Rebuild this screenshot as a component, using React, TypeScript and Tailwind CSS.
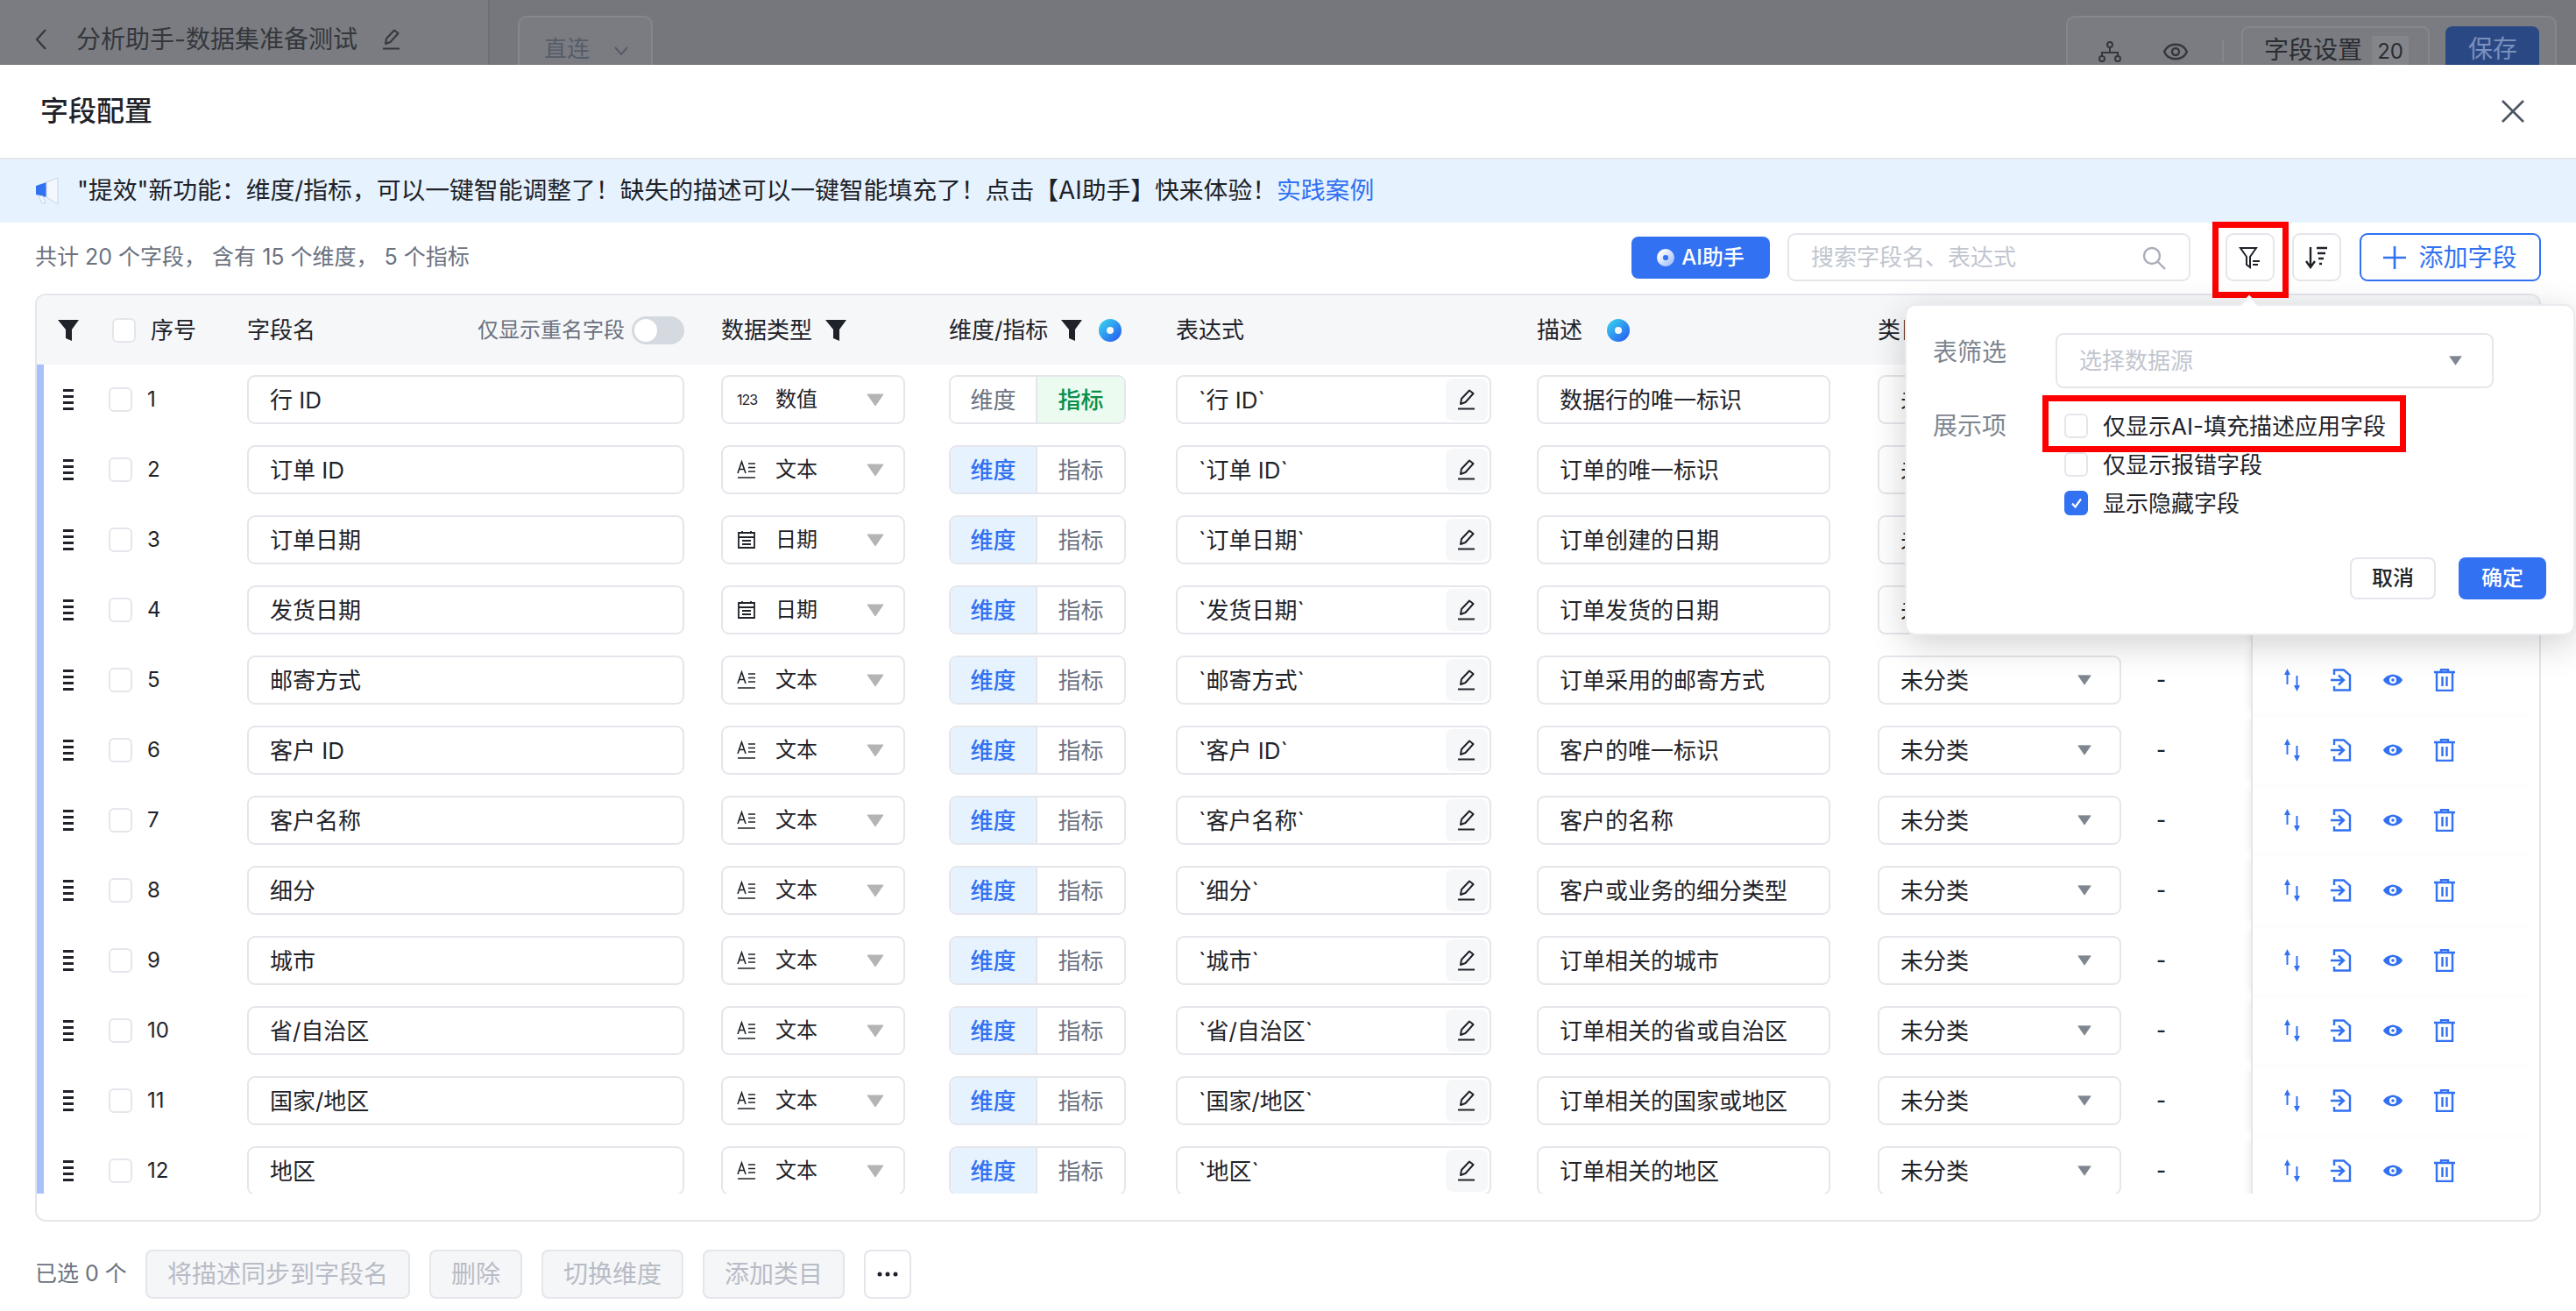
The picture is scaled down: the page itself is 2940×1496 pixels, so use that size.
import { ReactNode } from 'react'

type FieldType = 'num' | 'text' | 'date'

type Field = {
  id: number
  name: string
  type: FieldType
  desc: string
  metric?: boolean
}

const fields: Field[] = [
  { id: 1, name: '行 ID', type: 'num', desc: '数据行的唯一标识', metric: true },
  { id: 2, name: '订单 ID', type: 'text', desc: '订单的唯一标识' },
  { id: 3, name: '订单日期', type: 'date', desc: '订单创建的日期' },
  { id: 4, name: '发货日期', type: 'date', desc: '订单发货的日期' },
  { id: 5, name: '邮寄方式', type: 'text', desc: '订单采用的邮寄方式' },
  { id: 6, name: '客户 ID', type: 'text', desc: '客户的唯一标识' },
  { id: 7, name: '客户名称', type: 'text', desc: '客户的名称' },
  { id: 8, name: '细分', type: 'text', desc: '客户或业务的细分类型' },
  { id: 9, name: '城市', type: 'text', desc: '订单相关的城市' },
  { id: 10, name: '省/自治区', type: 'text', desc: '订单相关的省或自治区' },
  { id: 11, name: '国家/地区', type: 'text', desc: '订单相关的国家或地区' },
  { id: 12, name: '地区', type: 'text', desc: '订单相关的地区' },
]

const typeLabel: Record<FieldType, string> = { num: '数值', text: '文本', date: '日期' }

const gridCols = 'grid grid-cols-[60px_172px_541px_260px_259px_412px_389px_426px_329px]'

function Funnel() {
  return (
    <svg width="24" height="24" viewBox="0 0 24 24" className="shrink-0">
      <path d="M0 0H24L16 11V24L9 21V11Z" fill="#1f2329" />
    </svg>
  )
}

function AiMark({ size = 26, light = false }: { size?: number; light?: boolean }) {
  const gid = light ? 'aiLight' : 'aiBlue'
  return (
    <svg width={size} height={size} viewBox="0 0 26 26" className="shrink-0">
      <defs>
        <linearGradient id={gid} x1="0" y1="0" x2="1" y2="1">
          <stop offset="0" stopColor={light ? '#ffffff' : '#35c3ee'} />
          <stop offset="1" stopColor={light ? '#a9c4fb' : '#2a6bf2'} />
        </linearGradient>
      </defs>
      <circle cx="13" cy="13" r="8.500" fill="none" stroke={`url(#${gid})`} strokeWidth="9" />
    </svg>
  )
}

function Caret({ color = '#b4b4b4', w = 20, h = 15 }: { color?: string; w?: number; h?: number }) {
  return (
    <svg width={w} height={h} viewBox="0 0 20 15" preserveAspectRatio="none" className="shrink-0">
      <path d="M1 1H19L10 14Z" fill={color} stroke={color} strokeLinejoin="round" />
    </svg>
  )
}

function Check({ on = false, className = '' }: { on?: boolean; className?: string }) {
  return (
    <span
      className={`flex h-[28px] w-[27px] shrink-0 items-center justify-center rounded-[6px] border-2 ${
        on ? 'border-[#3271f2] bg-[#3271f2]' : 'border-[#e5e6eb] bg-white'
      } ${className}`}
    >
      {on && (
        <svg width="16" height="16" viewBox="0 0 16 16">
          <path d="M3 8.500L6.500 12.500L13 3.500" fill="none" stroke="#fff" strokeWidth="2.200" />
        </svg>
      )}
    </span>
  )
}

function Handle() {
  return (
    <div className="ml-[22px] flex h-[24px] w-[12px] flex-col justify-between">
      <span className="h-[3px] bg-[#1f2329]" />
      <span className="h-[3px] bg-[#1f2329]" />
      <span className="h-[3px] bg-[#1f2329]" />
      <span className="h-[3px] bg-[#1f2329]" />
    </div>
  )
}

function TypeIcon({ type }: { type: FieldType }) {
  if (type === 'num') {
    return <span className="w-[24px] text-[16px] tracking-[-1px] text-[#1f2329]">123</span>
  }
  if (type === 'date') {
    return (
      <svg width="22" height="22" viewBox="0 0 22 22" className="mr-[2px]">
        <path
          d="M2 3H20V20H2ZM2 8H20M6 12H16M6 16H16M6 1V3M16 1V3"
          fill="none"
          stroke="#1f2329"
          strokeWidth="1.800"
        />
      </svg>
    )
  }
  return (
    <svg width="22" height="24" viewBox="0 0 22 24" className="mr-[2px]">
      <path
        d="M1 16L5.500 3L10 16M2.500 11.500H8.500M13 5H21M13 9.500H21M13 14H21M1 21H21"
        fill="none"
        stroke="#1f2329"
        strokeWidth="1.600"
      />
    </svg>
  )
}

function Pencil({ color = '#1f2329' }: { color?: string }) {
  return (
    <svg width="22" height="24" viewBox="0 0 22 24" className="shrink-0">
      <path
        d="M4 17L5 11L14 1.500L18.500 5L9.500 15Z M1 22.500H20"
        fill="none"
        stroke={color}
        strokeWidth="2"
        strokeLinejoin="round"
      />
    </svg>
  )
}

function ActionIcons() {
  return (
    <div className="ml-[36px] flex items-center">
      <svg width="18" height="26" viewBox="0 0 18 26">
        <path d="M3.500 0L7 7H4.500V18H2.500V7H0ZM14.500 26L11 19H13.500V8H15.500V19H18Z" fill="#3271f2" />
      </svg>
      <svg width="24" height="26" viewBox="0 0 24 26" className="ml-[35px]">
        <path
          d="M4 7V1.500H15L22 7.500V24.500H4V20M0 13H14M9 7.500L15 13L9 18.500"
          fill="none"
          stroke="#3271f2"
          strokeWidth="2.400"
        />
      </svg>
      <svg width="24" height="24" viewBox="0 0 24 24" className="ml-[35px]">
        <path d="M1 12C5 4 19 4 23 12C19 20 5 20 1 12Z" fill="#3271f2" />
        <circle cx="12" cy="12" r="6.500" fill="#3271f2" />
        <circle cx="12" cy="12" r="4" fill="#fff" />
        <circle cx="12" cy="12" r="1.800" fill="#3271f2" />
      </svg>
      <svg width="24" height="26" viewBox="0 0 24 26" className="ml-[35px]">
        <path
          d="M0 4H24M8 4V1H16V4M3 4V25H21V4M9.500 9V20M14.500 9V20"
          fill="none"
          stroke="#3271f2"
          strokeWidth="2.400"
        />
      </svg>
    </div>
  )
}

function Box({ className = '', children }: { className?: string; children: ReactNode }) {
  return (
    <div className={`flex h-[56px] items-center rounded-[9px] border-2 border-[#e5e6eb] bg-white ${className}`}>
      {children}
    </div>
  )
}

function Row({ field }: { field: Field }) {
  return (
    <div className={`${gridCols} h-[80px] items-center border-l-8 border-[#a8c1fb]`}>
      <Handle />
      <div className="flex items-center pl-[14px] text-[24px] text-[#1f2329]">
        <Check />
        <span className="ml-[17px]">{field.id}</span>
      </div>
      <Box className="w-[499px] pl-[24px] text-[26px] text-[#1f2329]">{field.name}</Box>
      <Box className="w-[210px] pl-[16px] pr-[22px] text-[24px] text-[#1f2329]">
        <TypeIcon type={field.type} />
        <span className="ml-[20px] flex-1">{typeLabel[field.type]}</span>
        <Caret />
      </Box>
      <div className="flex h-[56px] w-[202px] overflow-hidden rounded-[9px] border-2 border-[#e5e6eb] text-[26px]">
        <span
          className={`flex flex-1 items-center justify-center border-r-2 border-[#e5e6eb] ${
            field.metric ? 'bg-white text-[#6b7280]' : 'bg-[#e6f3ff] font-medium text-[#3271f2]'
          }`}
        >
          维度
        </span>
        <span
          className={`flex w-[99px] items-center justify-center ${
            field.metric ? 'bg-[#ebfbf0] font-medium text-[#0a8f4a]' : 'bg-white text-[#6b7280]'
          }`}
        >
          指标
        </span>
      </div>
      <Box className="w-[360px] pl-[24px] pr-[2px] text-[26px] text-[#1f2329]">
        <span className="flex-1">{'`' + field.name + '`'}</span>
        <span className="flex h-[48px] w-[48px] items-center justify-center rounded-[8px] bg-[#f6f7f9]">
          <Pencil />
        </span>
      </Box>
      <Box className="w-[335px] pl-[24px] text-[26px] text-[#1f2329]">{field.desc}</Box>
      <div className="flex items-center">
        <Box className="w-[278px] pl-[24px] pr-[32px] text-[26px] text-[#1f2329]">
          <span className="flex-1">未分类</span>
          <Caret color="#7f8690" w={16} h={12} />
        </Box>
        <span className="ml-[40px] text-[24px] font-medium text-[#1f2329]">-</span>
      </div>
      <div className="flex h-[80px] items-center border-l-2 border-[#e5e6eb] shadow-[-6px_0_8px_-4px_rgba(0,0,0,0.08)]">
        <ActionIcons />
      </div>
    </div>
  )
}

function TopBar() {
  return (
    <div className="flex h-[74px] shrink-0 overflow-hidden bg-[#75777d]">
      <div className="flex w-[559px] items-center border-r-2 border-[#6e7076] bg-[#7a7c81] pl-[40px] pt-[16px] text-[#34373c]">
        <svg width="14" height="24" viewBox="0 0 14 24">
          <path d="M12 1L2 12L12 23" fill="none" stroke="#34373c" strokeWidth="2.200" />
        </svg>
        <span className="ml-[33px] text-[28px]">分析助手-数据集准备测试</span>
        <span className="ml-[28px]">
          <Pencil color="#34373c" />
        </span>
      </div>
      <div className="ml-[32px] mt-[18px] flex h-[56px] w-[154px] items-start rounded-t-[10px] border-2 border-b-0 border-[#85878c] bg-[#7a7c81] pl-[28px] pt-[17px] text-[26px] leading-[38px] text-[#565c69]">
        直连
        <svg width="16" height="10" viewBox="0 0 16 10" className="ml-[28px] mt-[16px]">
          <path d="M1 1L8 9L15 1" fill="none" stroke="#565c69" strokeWidth="2" />
        </svg>
      </div>
      <div className="ml-auto mr-[22px] mt-[18px] flex h-[56px] w-[560px] items-start rounded-t-[10px] border-2 border-b-0 border-[#85878c] bg-[#7a7c81]">
        <svg width="26" height="24" viewBox="0 0 26 24" className="ml-[35px] mt-[27px]">
          <path d="M13 7V13M4 18V13H22V18" fill="none" stroke="#34373c" strokeWidth="2" />
          <circle cx="13" cy="4" r="3" fill="none" stroke="#34373c" strokeWidth="2" />
          <circle cx="4" cy="20" r="3" fill="none" stroke="#34373c" strokeWidth="2" />
          <circle cx="22" cy="20" r="3" fill="none" stroke="#34373c" strokeWidth="2" />
        </svg>
        <svg width="28" height="22" viewBox="0 0 28 22" className="ml-[48px] mt-[28px]">
          <path d="M1 11C6 0 22 0 27 11C22 22 6 22 1 11Z" fill="none" stroke="#34373c" strokeWidth="2.400" />
          <circle cx="14" cy="11" r="4" fill="none" stroke="#34373c" strokeWidth="2.400" />
        </svg>
        <span className="ml-[39px] mt-[25px] h-[26px] w-[2px] bg-[#85878c]" />
        <div className="ml-[20px] mt-[10px] flex h-[44px] w-[215px] items-start rounded-t-[8px] border-2 border-b-0 border-[#85878c] pl-[24px] pt-[6px] text-[28px] leading-[38px] text-[#2a2d32]">
          字段设置
          <span className="ml-[11px] mt-[3px] h-[33px] w-[42px] bg-[#83858a] text-center text-[24px] leading-[36px]">20</span>
        </div>
        <div className="ml-[18px] mt-[10px] h-[44px] w-[107px] rounded-t-[8px] bg-[#2a4984] pl-[26px] pt-[8px] text-[28px] leading-[36px] text-[#7a90bd]">
          保存
        </div>
      </div>
    </div>
  )
}

function FilterPopover() {
  return (
    <div className="absolute left-[2174px] top-[347px] h-[378px] w-[765px] rounded-[12px] border-2 border-[#ebecf0] bg-white shadow-[0_10px_40px_rgba(0,0,0,0.18)]">
      <span className="absolute left-[383px] top-[-9px] h-[16px] w-[16px] rotate-45 border-l-2 border-t-2 border-[#ebecf0] bg-white" />
      <div className="ml-[30px] mt-[31px] flex">
        <span className="w-[140px] text-[28px] leading-[44px] text-[#7d8590]">表筛选</span>
        <div className="flex h-[63px] w-[500px] items-center rounded-[9px] border-2 border-[#e5e6eb] pl-[25px] pr-[34px] text-[26px] text-[#c2c6cf]">
          <span className="flex-1">选择数据源</span>
          <Caret color="#7f8690" w={15} h={11} />
        </div>
      </div>
      <div className="ml-[30px] mt-[21px] flex">
        <span className="w-[150px] text-[28px] leading-[44px] text-[#7d8590]">展示项</span>
        <div className="flex flex-col text-[26px] text-[#1f2329]">
          <label className="flex h-[44px] items-center gap-[17px]">
            <Check />
            仅显示AI-填充描述应用字段
          </label>
          <label className="flex h-[44px] items-center gap-[17px]">
            <Check />
            仅显示报错字段
          </label>
          <label className="flex h-[44px] items-center gap-[17px]">
            <Check on />
            显示隐藏字段
          </label>
        </div>
      </div>
      <div className="absolute right-[31px] top-[287px] flex gap-[26px] text-[24px]">
        <button className="h-[48px] w-[98px] rounded-[8px] border-2 border-[#e5e6eb] bg-white font-medium text-[#1f2329]">
          取消
        </button>
        <button className="h-[48px] w-[100px] rounded-[8px] bg-[#3271f2] font-medium text-white">确定</button>
      </div>
    </div>
  )
}

export default function App() {
  return (
    <div className="relative h-[1496px] w-[2940px] overflow-hidden bg-white font-[family-name:Inter,'Noto_Sans_CJK_SC',sans-serif]">
      <TopBar />

      <div className="flex h-[108px] items-center justify-between border-b-2 border-[#e5e6eb] pl-[46px] pr-[58px]">
        <h1 className="text-[32px] font-medium text-[#1f2329]">字段配置</h1>
        <svg width="28" height="28" viewBox="0 0 28 28">
          <path d="M2 2L26 26M26 2L2 26" stroke="#4b5563" strokeWidth="2.600" />
        </svg>
      </div>

      <div className="flex h-[72px] items-center bg-[#e6f3ff] pl-[40px] text-[27.800px] text-[#1f2329]">
        <svg width="28" height="32" viewBox="0 0 28 32">
          <path d="M1 10L13 6V23L1 20Z" fill="#3271f2" />
          <path d="M13 6L26 1V31L13 23Z" fill="#f4f8fd" stroke="#c5d4ea" strokeWidth="1" />
          <path d="M4 21L8 30H12L9 22Z" fill="#f4f8fd" stroke="#c5d4ea" strokeWidth="1" />
        </svg>
        <span className="ml-[20px]">
          "提效"新功能：维度/指标，可以一键智能调整了！缺失的描述可以一键智能填充了！点击【AI助手】快来体验！
        </span>
        <span className="text-[#3271f2]">实践案例</span>
      </div>

      <div className="flex h-[81px] items-center pb-[2px] pl-[40px] pr-[40px]">
        <span className="text-[25px] text-[#6b7280]">共计 20 个字段， 含有 15 个维度， 5 个指标</span>
        <button className="ml-auto flex h-[48px] w-[158px] items-center justify-center gap-[8px] rounded-[8px] bg-[#3271f2] text-[24px] font-medium text-white">
          <AiMark size={20} light />
          AI助手
        </button>
        <div className="ml-[20px] flex h-[55px] w-[460px] items-center rounded-[9px] border-2 border-[#e5e6eb] pl-[25px] pr-[26px] text-[26px] text-[#c2c6cf]">
          <span className="flex-1">搜索字段名、表达式</span>
          <svg width="28" height="28" viewBox="0 0 28 28">
            <circle cx="12" cy="12" r="9" fill="none" stroke="#a8adb7" strokeWidth="2.400" />
            <path d="M19 19L27 27" stroke="#a8adb7" strokeWidth="2.400" />
          </svg>
        </div>
        <button className="relative ml-[40px] flex h-[55px] w-[56px] items-center justify-center rounded-[9px] border-2 border-[#e5e6eb] bg-white">
          <svg width="26" height="26" viewBox="0 0 26 26">
            <path
              d="M2 2H20L13 12V24L9 21V12Z M16 17H24M16 21H22"
              fill="none"
              stroke="#1f2329"
              strokeWidth="2"
            />
          </svg>
          <span className="absolute left-[-17px] top-[-15px] h-[87px] w-[87px] border-[7px] border-[#ff0000]" />
        </button>
        <button className="ml-[20px] flex h-[55px] w-[56px] items-center justify-center rounded-[9px] border-2 border-[#e5e6eb] bg-white">
          <svg width="26" height="26" viewBox="0 0 26 26">
            <path
              d="M6 1V22M1 17L6 24L11 17M13 2H25M14 8H23M15 14H21M16 20H19"
              fill="none"
              stroke="#1f2329"
              strokeWidth="2.400"
            />
          </svg>
        </button>
        <button className="ml-[21px] flex h-[55px] w-[207px] items-center justify-center gap-[14px] rounded-[9px] border-2 border-[#3271f2] bg-white text-[28px] text-[#3271f2]">
          <svg width="26" height="26" viewBox="0 0 26 26">
            <path d="M13 0V26M0 13H26" stroke="#3271f2" strokeWidth="2.600" />
          </svg>
          添加字段
        </button>
      </div>

      <div className="mx-[40px] flex h-[1059px] flex-col overflow-hidden rounded-[12px] border-2 border-[#e5e6eb]">
        <div className={`${gridCols} h-[79px] shrink-0 items-center bg-[#f6f7f9] pl-[8px] text-[26px] text-[#1f2329]`}>
          <div className="pl-[16px]">
            <Funnel />
          </div>
          <div className="flex items-center pl-[18px]">
            <Check />
            <span className="ml-[17px]">序号</span>
          </div>
          <div className="flex w-[499px] items-center">
            <span>字段名</span>
            <span className="ml-auto text-[24px] text-[#6b7280]">仅显示重名字段</span>
            <span className="ml-[8px] flex h-[32px] w-[60px] items-center rounded-full bg-[#d5d9e0] pl-[3px]">
              <span className="h-[26px] w-[26px] rounded-full bg-white" />
            </span>
          </div>
          <div className="flex items-center gap-[15px]">
            数据类型
            <Funnel />
          </div>
          <div className="flex items-center">
            维度/指标
            <span className="ml-[15px]">
              <Funnel />
            </span>
            <span className="ml-[19px]">
              <AiMark />
            </span>
          </div>
          <div>表达式</div>
          <div className="flex items-center gap-[28px]">
            描述
            <AiMark />
          </div>
          <div>类目</div>
          <div />
        </div>
        <div className="h-[946px] shrink-0 overflow-hidden">
          {fields.map((field) => (
            <Row key={field.id} field={field} />
          ))}
        </div>
      </div>

      <div className="mt-[32px] flex items-center gap-[22px] pl-[40px] text-[28px] text-[#b8bcc6]">
        <span className="w-[104px] whitespace-nowrap text-[25px] text-[#6b7280]">已选 0 个</span>
        <span className="flex h-[56px] w-[302px] items-center justify-center rounded-[8px] border-2 border-[#e5e6eb] bg-[#f5f6f8]">
          将描述同步到字段名
        </span>
        <span className="flex h-[56px] w-[106px] items-center justify-center rounded-[8px] border-2 border-[#e5e6eb] bg-[#f5f6f8]">
          删除
        </span>
        <span className="flex h-[56px] w-[162px] items-center justify-center rounded-[8px] border-2 border-[#e5e6eb] bg-[#f5f6f8]">
          切换维度
        </span>
        <span className="flex h-[56px] w-[162px] items-center justify-center rounded-[8px] border-2 border-[#e5e6eb] bg-[#f5f6f8]">
          添加类目
        </span>
        <span className="flex h-[56px] w-[54px] items-center justify-center rounded-[8px] border-2 border-[#e5e6eb] bg-white">
          <svg width="24" height="6" viewBox="0 0 24 6">
            <circle cx="3" cy="3" r="2.500" fill="#1f2329" />
            <circle cx="12" cy="3" r="2.500" fill="#1f2329" />
            <circle cx="21" cy="3" r="2.500" fill="#1f2329" />
          </svg>
        </span>
      </div>

      <FilterPopover />
      <span className="absolute left-[2331px] top-[451px] h-[65px] w-[415px] border-[7px] border-[#ff0000]" />
    </div>
  )
}
